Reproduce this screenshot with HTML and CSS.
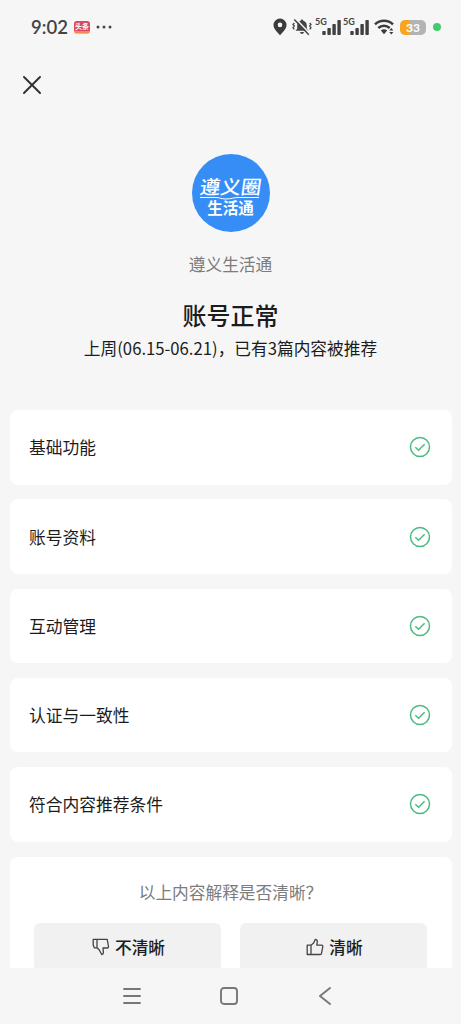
FILE: index.html
```html
<!DOCTYPE html>
<html lang="zh-CN">
<head>
<meta charset="utf-8">
<meta name="viewport" content="width=device-width, initial-scale=1">
<title>账号状态</title>
<link rel="stylesheet" href="styles.css">
</head>
<body>
<div class="screen">
  <header class="status">
    <span class="time">9:02</span>
    <span class="app-badge">头条</span>
    <svg class="dots" width="16" height="4" viewBox="0 0 16 4" fill="#484848"><circle cx="2" cy="2" r="1.5"/><circle cx="8" cy="2" r="1.5"/><circle cx="14" cy="2" r="1.5"/></svg>
    <div class="status-right">
      <svg width="14" height="18" viewBox="0 0 14 18"><path fill="#3c3c3c" fill-rule="evenodd" d="M7 .5a6.500 6.500 0 0 0-6.500 6.500C.5 11 4 13.500 7 17.300 10 13.500 13.500 11 13.500 7A6.500 6.500 0 0 0 7 .5zM7 4.600a2.300 2.300 0 1 1 0 4.600 2.300 2.300 0 0 1 0-4.600z"/></svg>
      <svg class="mute" width="20" height="18" viewBox="0 0 20 18"><path fill="#444" d="M10 1.500c.9 0 1.300.6 1.300 1.300 2.200.6 3.500 2.200 3.500 4.700v3.300l1.700 2H3.500l1.700-2V7.500c0-2.500 1.300-4.100 3.500-4.700 0-.7.4-1.300 1.300-1.300zM8 14h4c-.3 1.200-1 1.900-2 1.900S8.300 15.200 8 14z"/><path d="M4 1l14.500 15.300" stroke="#f6f6f6" stroke-width="1.600"/><path d="M2.300 1.500l14.500 15.300" stroke="#444" stroke-width="1.500"/><path d="M2.300 5L1 6.500l1.300 1.600L1 9.700l1.300 1.600M17.700 5L19 6.500l-1.300 1.600L19 9.700l-1.300 1.600" fill="none" stroke="#444" stroke-width="1.300"/></svg>
      <div class="signal"><span>5G</span><svg width="19" height="15" viewBox="0 0 19 15" fill="#404040"><rect x=".3" y="11" width="3.400" height="4" rx=".8"/><rect x="5.400" y="8" width="3.400" height="7" rx=".8"/><rect x="10.400" y="4" width="3.400" height="11" rx=".8"/><rect x="15.400" y="0" width="3.400" height="15" rx=".8"/></svg></div>
      <div class="signal"><span>5G</span><svg width="19" height="15" viewBox="0 0 19 15" fill="#404040"><rect x=".3" y="11" width="3.400" height="4" rx=".8"/><rect x="5.400" y="8" width="3.400" height="7" rx=".8"/><rect x="10.400" y="4" width="3.400" height="11" rx=".8"/><rect x="15.400" y="0" width="3.400" height="15" rx=".8"/></svg></div>
      <svg class="wifi" width="21" height="16" viewBox="0 0 21 16"><g fill="none" stroke="#3c3c3c" stroke-width="2.500"><path d="M1 5.300c5-4.800 13-4.800 18 0"/><path d="M4.300 9c3.200-3 8.200-3 11.400 0"/></g><path fill="#3c3c3c" d="M6.800 11.500c1.900-1.600 4.500-1.600 6.400 0L10 15.200zM15.200 11.500L17.300 9l2.100 2.500zM15.200 13l2.100 2.500 2.100-2.500z"/></svg>
      <div class="battery"><span>33</span></div>
      <i class="live"></i>
    </div>
  </header>
  <main class="page">
    <svg class="close" width="18" height="18" viewBox="0 0 18 18"><path d="M1 1l16 16M17 1L1 17" stroke="#303030" stroke-width="1.900" stroke-linecap="round"/></svg>
    <section class="profile">
      <div class="avatar">
        <span class="logo-top">遵义圈</span>
        <span class="logo-bottom">生活通</span>
        <svg class="swash" width="64" height="5" viewBox="0 0 64 5"><path d="M1 1.500h16c4 0 5 1.500 10 1.500s8-1.500 12-1.500h21" fill="none" stroke="#fff" stroke-width="1"/></svg>
      </div>
      <p class="name">遵义生活通</p>
      <h1 class="title">账号正常</h1>
      <p class="summary">上周(06.15-06.21)，已有3篇内容被推荐</p>
    </section>
    <section class="cards">
      <div class="card"><span>基础功能</span><svg class="ok" viewBox="0 0 22 22"><circle cx="11" cy="11" r="9.500"/><path d="M6.300 11.300l3.300 3 6-6"/></svg></div>
      <div class="card"><span>账号资料</span><svg class="ok" viewBox="0 0 22 22"><circle cx="11" cy="11" r="9.500"/><path d="M6.300 11.300l3.300 3 6-6"/></svg></div>
      <div class="card"><span>互动管理</span><svg class="ok" viewBox="0 0 22 22"><circle cx="11" cy="11" r="9.500"/><path d="M6.300 11.300l3.300 3 6-6"/></svg></div>
      <div class="card"><span>认证与一致性</span><svg class="ok" viewBox="0 0 22 22"><circle cx="11" cy="11" r="9.500"/><path d="M6.300 11.300l3.300 3 6-6"/></svg></div>
      <div class="card"><span>符合内容推荐条件</span><svg class="ok" viewBox="0 0 22 22"><circle cx="11" cy="11" r="9.500"/><path d="M6.300 11.300l3.300 3 6-6"/></svg></div>
      <div class="feedback">
        <p class="question">以上内容解释是否清晰？</p>
        <div class="choices">
          <button class="choice"><svg class="thumb" viewBox="0 0 18 18"><path d="M1.200 1.300h14l1.300 7.200c.1.900-.4 1.500-1.200 1.500H11l.4 4.400c0 1.300-.6 2-1.700 2.100L7.300 12 5 9.800H2.300L1.200 7zM5 1.300v8.500"/></svg>不清晰</button>
          <button class="choice"><svg class="thumb" viewBox="0 0 18 18"><path d="M1.200 7.200H5v9.300H1.200zM5 7.200l2.600-2.100 1.600-3.700c1.300-.1 2.200.8 2.100 2.200l-.5 3.500h4.700c.9 0 1.400.6 1.300 1.500l-1.300 6.800c-.1.700-.5 1.100-1.200 1.100H5"/></svg>清晰</button>
        </div>
      </div>
    </section>
  </main>
  <nav class="navbar">
    <svg width="18" height="18" viewBox="0 0 18 18"><path d="M1 2h16M1 9h16M1 16h16"/></svg>
    <svg width="18" height="18" viewBox="0 0 18 18"><rect x="1" y="1" width="16" height="16" rx="3"/></svg>
    <svg width="18" height="18" viewBox="0 0 18 18"><path d="M13 1L3 9l10 8"/></svg>
  </nav>
</div>
</body>
</html>
```
FILE: styles.css
```css
* { box-sizing: border-box; }
body {
  margin: 0;
  background: #f6f6f6;
  color: #1c1c1c;
  font-family: "Noto Sans CJK SC", sans-serif;
}
p, h1 { margin: 0; }
svg { display: block; flex: none; }
.screen {
  width: 461px;
  height: 1024px;
  display: flex;
  flex-direction: column;
  overflow: hidden;
}
.status {
  height: 54px;
  flex: none;
  display: flex;
  align-items: center;
  padding: 0 20px 0 31px;
}
.time {
  width: 37px;
  font: 600 18.500px/22px Lato, sans-serif;
  color: #444;
  white-space: nowrap;
}
.app-badge {
  margin-left: 6px;
  width: 16px;
  height: 13px;
  border-radius: 3px;
  background: linear-gradient(#d94a60 0 76%, #f18b52 76% 90%, #a9cdb8 90%);
  color: #fff;
  font-size: 7px;
  line-height: 10px;
  font-weight: 700;
  text-align: center;
  white-space: nowrap;
}
.dots { margin-left: 6px; }
.status-right {
  margin-left: auto;
  display: flex;
  align-items: center;
}
.mute { margin: 0 3px 0 5px; }
.signal {
  width: 28px;
  height: 18px;
  display: flex;
  align-items: flex-end;
}
.signal span {
  width: 7px;
  align-self: flex-start;
  font: 700 9px/8px Lato, sans-serif;
  color: #444;
}
.signal svg { margin-bottom: 1px; }
.wifi { margin: 0 5px 0 3px; }
.battery {
  width: 26px;
  height: 15px;
  border-radius: 5px;
  background: linear-gradient(90deg, #f7a51f 36%, #b3b3b3 36%);
  color: #fff;
  font: 700 12px/15px Lato, sans-serif;
  text-align: center;
}
.live {
  width: 8px;
  height: 8px;
  margin-left: 7px;
  border-radius: 50%;
  background: #43cb70;
}
.page {
  height: 914px;
  flex: none;
  overflow: hidden;
  padding: 22px 9px 0 10px;
}
.close { margin-left: 13px; }
.profile {
  display: flex;
  flex-direction: column;
  align-items: center;
  height: 316px;
  padding-top: 60px;
  padding-right: 1px;
}
.avatar {
  position: relative;
  width: 78px;
  height: 78px;
  border-radius: 50%;
  background: #358df5;
  color: #fff;
  display: flex;
  flex-direction: column;
  align-items: center;
  padding-top: 22px;
}
.logo-top {
  font-size: 20.500px;
  line-height: 21px;
  font-weight: 500;
  transform: skewX(-8deg) scaleY(.92);
}
.swash {
  position: absolute;
  left: 7px;
  top: 42px;
}
.logo-bottom {
  font-size: 15.500px;
  line-height: 16px;
  font-weight: 700;
  margin-top: 2px;
}
.name {
  margin-top: 20px;
  font-size: 16.700px;
  line-height: 24px;
  color: #7c7c7c;
}
.title {
  margin-top: 21px;
  font-size: 24px;
  line-height: 36px;
  font-weight: 500;
}
.summary {
  margin-top: 3px;
  font-size: 16.700px;
  line-height: 24px;
  white-space: nowrap;
}
.cards {
  display: flex;
  flex-direction: column;
  gap: 14.800px;
}
.card {
  height: 74.500px;
  flex: none;
  border-radius: 8px;
  background: #fff;
  display: flex;
  align-items: center;
  justify-content: space-between;
  padding: 0 21px 0 19px;
  font-size: 16.750px;
  line-height: 24px;
}
.ok {
  width: 22px;
  height: 22px;
  fill: none;
  stroke: #4dbb83;
  stroke-width: 1.500;
}
.feedback {
  height: 140px;
  flex: none;
  margin-top: .5px;
  border-radius: 8px;
  background: #fff;
  padding: 23px 25px 0 24px;
}
.question {
  text-align: center;
  font-size: 16.700px;
  line-height: 24px;
  color: #7c7c7c;
}
.choices {
  margin-top: 19px;
  display: flex;
  gap: 19px;
}
.choice {
  flex: 1;
  height: 48px;
  border: 0;
  border-radius: 6px;
  background: #f1f1f1;
  display: flex;
  align-items: center;
  justify-content: center;
  gap: 5px;
  padding: 0 0 0 2px;
  color: #1c1c1c;
  font: 500 16.700px/24px "Noto Sans CJK SC", sans-serif;
}
.thumb {
  width: 18px;
  height: 18px;
  fill: none;
  stroke: #444;
  stroke-width: 1.300;
  stroke-linejoin: round;
}
.navbar {
  flex: 1;
  display: flex;
  justify-content: center;
  align-items: center;
  gap: 79px;
  padding-right: 4px;
}
.navbar svg {
  fill: none;
  stroke: #777;
  stroke-width: 1.900;
  stroke-linecap: round;
  stroke-linejoin: round;
}
```
